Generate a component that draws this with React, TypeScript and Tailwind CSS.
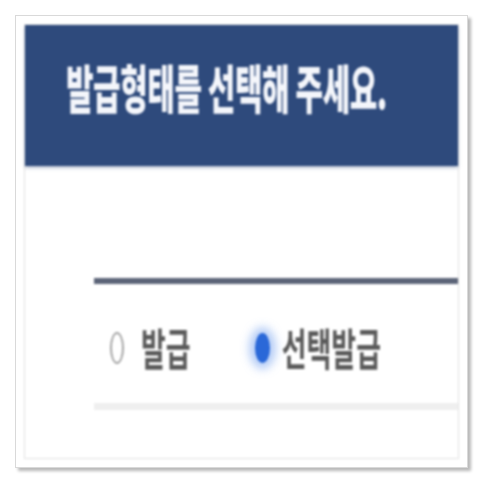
import React from "react";

export default function App() {
  const font = { fontFamily: '"Noto Sans CJK KR", "Noto Sans", sans-serif' };
  return (
    <div className="w-[484px] h-[484px] bg-white pt-[15px] pl-[15px]" style={font}>
      <div className="w-[453px] h-[453px] bg-white border border-[#d9d9d9] shadow-[3px_3px_3px_rgba(0,0,0,0.28)] p-[8px]">
        <div className="w-full h-full border border-[#e2e2e2] flex flex-col blur-[0.8px]">
          <header className="h-[141px] bg-[#2e4a7c] flex items-center pl-[41px] pb-[20px] shadow-[0_2px_3px_rgba(46,74,124,0.35)]">
            <span className="inline-block text-[#f4f6fb] font-black text-[30px] leading-none tracking-[-0.5px] scale-y-[1.75]">
              발급형태를 선택해 주세요.
            </span>
          </header>
          <div className="pl-[69px] pt-[112px]">
            <div className="h-[6px] bg-[#5c6478]" />
            <div className="h-[119px] pt-[8px] flex items-center pl-[16px]">
              <span className="inline-block w-[14px] h-[32px] rounded-[50%] border-2 border-[#a3a3a3] bg-white" />
              <span className="inline-block ml-[17px] text-[27px] leading-none font-bold text-[#5a5a5a] scale-y-[1.65]">
                발급
              </span>
              <span className="inline-block ml-[64px] w-[15px] h-[30px] rounded-[50%] bg-[#2a68d8] shadow-[0_0_8px_6px_rgba(130,170,240,0.6)]" />
              <span className="inline-block ml-[12px] text-[27px] leading-none font-bold text-[#5a5a5a] scale-y-[1.65]">
                선택발급
              </span>
            </div>
            <div className="h-[7px] bg-[#efefef]" />
          </div>
        </div>
      </div>
    </div>
  );
}
